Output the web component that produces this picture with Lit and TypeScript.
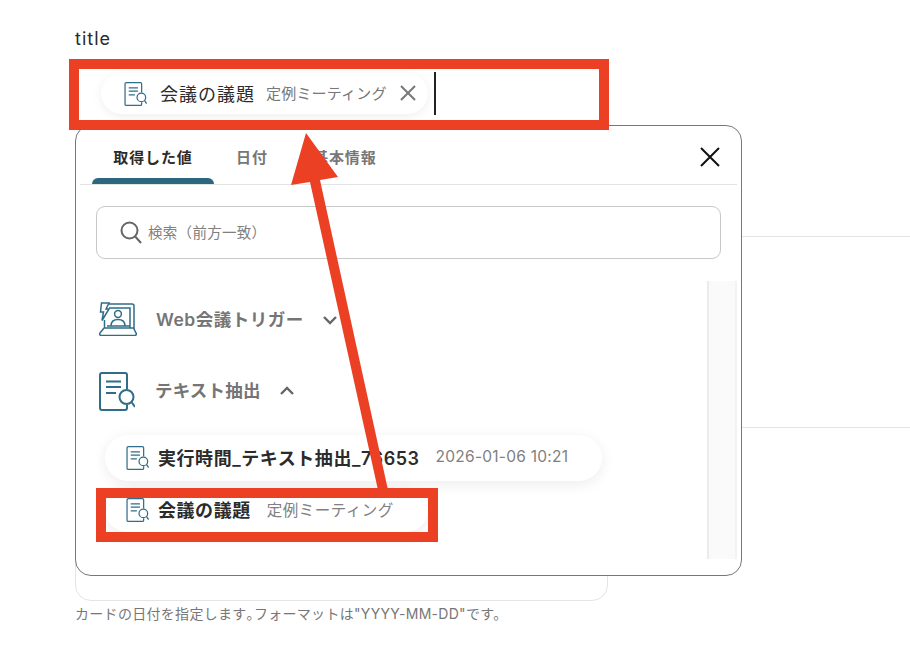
import { LitElement, html, css, svg } from "lit";
import { customElement } from "lit/decorators.js";

const docIcon = (w: number, h: number) => html`<svg class="doc" width=${w} height=${h} viewBox="0 0 36 39" fill="none" stroke="#2f6d88" stroke-width="2">
  <path d="M28 17V3a2 2 0 0 0-2-2H3a2 2 0 0 0-2 2v33a2 2 0 0 0 2 2h23a2 2 0 0 0 2-2v-3" />
  <path d="M7 9.500h15M7 15h15M7 21h10" />
  <circle cx="27.500" cy="25" r="7" />
  <path d="M32.500 30 36 35" />
</svg>`;

@customElement("app-root")
export class AppRoot extends LitElement {
  static styles = css`
    :host { display: block; position: relative; width: 910px; height: 663px; overflow: hidden; background: #fff;
      font-family: Inter, "Noto Sans CJK JP", sans-serif; color: #222; }
    .page { display: flex; flex-direction: column; padding: 27px 0 0 75px; height: 663px; box-sizing: border-box; }
    .label { font-size: 18px; line-height: 24px; letter-spacing: 1px; color: #2a2a2a; }
    .input { display: flex; align-items: center; height: 43px; margin: 21px 0 0 26px; gap: 6px; }
    .chip { display: flex; align-items: center; height: 41px; box-sizing: border-box; width: 327px; padding: 0 0 0 23px; border-radius: 21px; background: #fff;
      box-shadow: 0 2px 10px rgba(0,0,0,.07); }
    .chip .name { margin-left: 13px; padding-bottom: 2px; font-size: 18px; letter-spacing: 1px; color: #2b2b2b; white-space: nowrap; }
    .chip .sub { margin-left: 11px; padding-bottom: 2px; font-size: 15px; letter-spacing: .2px; color: #777; white-space: nowrap; }
    .chip .x { margin-left: 12px; flex: none; position: relative; top: -1px; }
    .caret { width: 2px; height: 43px; background: #222; }
    .divider { height: 1px; background: #e2e4e8; }
    .d1 { margin-top: 121px; }
    .d2 { margin-top: 190px; }
    .field { width: 533px; height: 173px; box-sizing: border-box; border: 1px solid #e2e4e8; border-radius: 0 0 16px 16px; }
    .help { margin-top: 4px; font-size: 14px; line-height: 18px; color: #777; letter-spacing: .3px; white-space: nowrap; }
    .help .stop { font-feature-settings: "halt"; }

    .popup { position: absolute; left: 75px; top: 125px; width: 667px; height: 451px; box-sizing: border-box; background: #fff;
      border: 1px solid #777; border-radius: 16px; padding: 0 4px; display: flex; flex-direction: column; }
    .tabs { display: flex; align-items: stretch; height: 58px; border-bottom: 1px solid #e3e3e3; padding-left: 12px; flex: none; }
    .tab { display: flex; align-items: center; justify-content: center; padding-top: 2px; font-size: 15px; font-weight: 700; letter-spacing: .9px; color: #777; box-sizing: border-box; white-space: nowrap; }
    .tab.on { position: relative; width: 122px; color: #2b2b2b; margin-right: 22px; }
    .tab.on::after { content: ""; position: absolute; left: 0; right: 0; bottom: 0; height: 6px; background: #2c667f; border-radius: 6px 6px 0 0; }
    .tab.t2 { width: 32px; margin-right: 45px; }
    .close { margin-left: auto; margin-right: 17px; align-self: center; display: block; position: relative; top: 2px; }
    .search { flex: none; display: flex; align-items: center; height: 53px; margin: 21px 16px 0 16px; box-sizing: border-box; border: 1px solid #c8c8c8; border-radius: 9px; padding: 0 0 0 23px; gap: 6px; font-size: 14.500px; letter-spacing: .3px; color: #808080; }
    .search span { padding-bottom: 2px; }
    .body { flex: 1; display: flex; min-height: 0; margin: 22px 0 16px; }
    .list { flex: 1; display: flex; flex-direction: column; min-width: 0; padding-left: 19px; }
    .group { display: flex; align-items: center; font-size: 17.500px; font-weight: 600; color: #757575; white-space: nowrap; }
    .g1 { height: 38px; margin-top: 19px; letter-spacing: .5px; }
    .g2 { height: 40px; margin-top: 33px; letter-spacing: .2px; }
    .g1 .label-text { padding-bottom: 2px; }
    .g2 .label-text { padding-bottom: 4px; }
    .group .ic { flex: none; display: flex; }
    .g1 .ic { width: 57px; }
    .g2 .ic { width: 56px; }
    .g1 .chev { margin-left: 18px; position: relative; top: 1px; }
    .g2 .chev { margin-left: 18px; }
    .item { display: flex; align-items: center; height: 46px; padding-left: 21px; box-sizing: border-box; border-radius: 23px; background: #fff; box-shadow: 0 3px 14px rgba(0,0,0,.08); margin-left: 6px; }
    .i1 { width: 497px; margin-top: 24px; }
    .i2 { width: 323px; height: 44px; margin-top: 7px; }
    .item .name { margin-left: 9px; padding-bottom: 3px; font-size: 18px; font-weight: 600; color: #2b2b2b; letter-spacing: .55px; white-space: nowrap; }
    .item .sub { margin-left: 16px; padding-bottom: 3px; font-size: 15.500px; letter-spacing: .25px; color: #808080; white-space: nowrap; }
    .i2 .sub { letter-spacing: .5px; }
    .track { flex: none; width: 30px; box-sizing: border-box; background: #fafafa; border-left: 2px solid #ebebeb; border-right: 2px solid #f2f2f2; }

    .mark { position: absolute; box-sizing: border-box; border: 10px solid #ec4025; }
    .m1 { left: 69px; top: 59px; width: 540px; height: 71px; }
    .m2 { left: 96px; top: 488px; width: 342px; height: 54px; }
    .arrow { position: absolute; left: 0; top: 0; pointer-events: none; }
  `;

  render() {
    return html`
      <div class="page">
        <div class="label">title</div>
        <div class="input">
          <div class="chip">
            ${docIcon(23, 24)}
            <span class="name">会議の議題</span>
            <span class="sub">定例ミーティング</span>
            <svg class="x" width="18" height="18" viewBox="0 0 18 18" fill="none" stroke="#777" stroke-width="2"><path d="M2 2l14 14M16 2 2 16" /></svg>
          </div>
          <div class="caret"></div>
        </div>
        <div class="divider d1"></div>
        <div class="divider d2"></div>
        <div class="field"></div>
        <div class="help">カードの日付を指定します<span class="stop">。</span>フォーマットは"YYYY-MM-DD"です。</div>
      </div>

      <div class="popup">
        <div class="tabs">
          <div class="tab on">取得した値</div>
          <div class="tab t2">日付</div>
          <div class="tab t3">基本情報</div>
          <svg class="close" width="20" height="20" viewBox="0 0 20 20" fill="none" stroke="#111" stroke-width="2"><path d="M1 1l18 18M19 1 1 19" /></svg>
        </div>
        <div class="search">
          <svg width="22" height="23" viewBox="0 0 22 23" fill="none" stroke="#666" stroke-width="2"><circle cx="9.500" cy="9.500" r="8" /><path d="M15.200 15.500 21 22" /></svg>
          <span>検索（前方一致）</span>
        </div>
        <div class="body">
          <div class="list">
            <div class="group g1">
              <span class="ic"><svg width="38" height="34" viewBox="0 0 38 34" fill="none" stroke="#2f6d88" stroke-width="1.500">
                <path d="M10 2h23a2 2 0 0 1 2 2v22H5.500V18" />
                <path d="M10 6h21v20M8 24h23" />
                <path d="M2.500 1h7.500L7 7h3L3 18.500l1.500-8.500H1.500z" />
                <circle cx="19" cy="12" r="3.400" />
                <path d="M12 24c0-4.500 3-6.500 7-6.500s7 2 7 6.500" />
                <path d="M5 26 1 31a1.500 1.500 0 0 0 1.200 2.500h33.600A1.500 1.500 0 0 0 37 31l-2.500-5" />
              </svg></span>
              <span class="label-text">Web会議トリガー</span>
              <svg class="chev" width="16" height="10" viewBox="0 0 16 10" fill="none" stroke="#666" stroke-width="2.400"><path d="M2 2l6 6 6-6" /></svg>
            </div>
            <div class="group g2">
              <span class="ic">${docIcon(36, 39)}</span>
              <span class="label-text">テキスト抽出</span>
              <svg class="chev" width="16" height="10" viewBox="0 0 16 10" fill="none" stroke="#666" stroke-width="2.400"><path d="M2 8l6-6 6 6" /></svg>
            </div>
            <div class="item i1">
              ${docIcon(23, 24)}
              <span class="name">実行時間_テキスト抽出_76653</span>
              <span class="sub">2026-01-06 10:21</span>
            </div>
            <div class="item i2">
              ${docIcon(23, 24)}
              <span class="name">会議の議題</span>
              <span class="sub">定例ミーティング</span>
            </div>
          </div>
          <div class="track"></div>
        </div>
      </div>

      <svg class="arrow" width="910" height="663" viewBox="0 0 910 663">
        ${svg`<path fill="#ec4025" d="M378 490 L310 182 L291 185 L306 133 L338 177 L320 180 L388 490 Z" />`}
      </svg>
      <div class="mark m1"></div>
      <div class="mark m2"></div>
    `;
  }
}
